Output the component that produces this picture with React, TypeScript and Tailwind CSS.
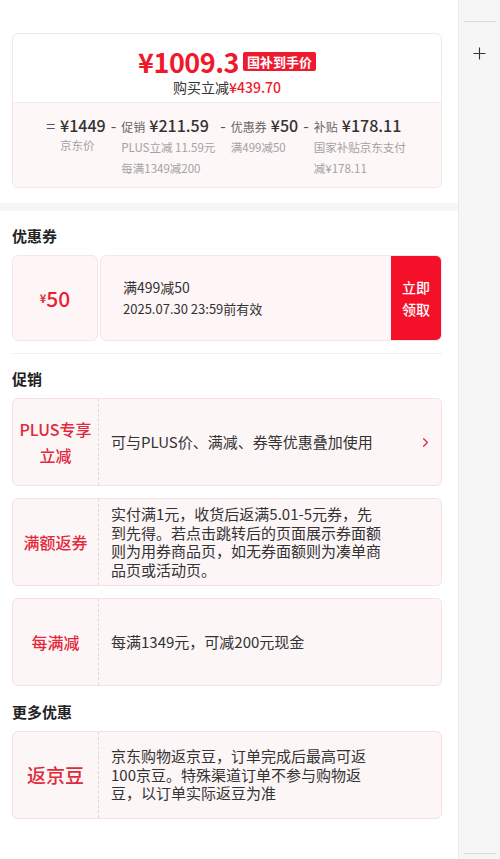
import React from 'react';
import { ChevronRight } from 'lucide-react';

const FONT = { fontFamily: '"Noto Sans CJK SC", "Noto Sans", sans-serif' };

interface PriceColProps {
  label?: string;
  value: string;
  sub: string[];
  width?: string;
}

const PriceCol: React.FC<PriceColProps> = ({ label, value, sub, width }) => (
  <div className={`flex flex-col ${width ?? ''}`}>
    <div className="flex items-baseline gap-[4px] leading-[22px] whitespace-nowrap">
      {label && <span className="text-[12px] text-[#666]">{label}</span>}
      <span className="text-[16px] font-medium text-[#333]">{value}</span>
    </div>
    <div className="-mt-[1px] text-[11.5px] leading-[21px] text-[#a3a3a3]">
      {sub.map(s => <div key={s}>{s}</div>)}
    </div>
  </div>
);

const Op: React.FC<{ c: string }> = ({ c }) => (
  <span className="text-[16px] leading-[22px] text-[#555]">{c}</span>
);

interface PromoProps {
  tag: React.ReactNode;
  tagClass?: string;
  text: string;
  arrow?: boolean;
}

const PromoCard: React.FC<PromoProps> = ({ tag, tagClass, text, arrow }) => (
  <div className="flex h-[88px] rounded-[6px] border border-[#f6e0e3] bg-[#fdf6f7]">
    <div className={`flex w-[86px] shrink-0 items-center justify-center border-r border-dashed border-[#ecd3d7] text-center font-medium text-[#e3283c] ${tagClass ?? 'text-[16px] leading-[26px]'}`}>
      {tag}
    </div>
    <div className="flex flex-1 items-center pl-[12px] pr-[8px]">
      <p className="max-w-[274px] text-[15px] leading-[18.5px] text-[#333]">{text}</p>
      {arrow && <ChevronRight size={15} strokeWidth={2} className="ml-auto text-[#e3283c]" />}
    </div>
  </div>
);

const SectionTitle: React.FC<{ children: React.ReactNode }> = ({ children }) => (
  <h3 className="text-[15px] font-bold leading-[20px] text-[#222]">{children}</h3>
);

export default function App() {
  return (
    <div className="flex min-h-screen bg-white" style={FONT}>
      <div className="w-[458px] shrink-0 pt-[33px] pb-[26px]">
        {/* price breakdown */}
        <div className="ml-[12px] mr-[16px] overflow-hidden rounded-[6px] border border-[#f5e6e8]">
          <div className="flex flex-col items-center pt-[12px] pb-[5px]">
            <div className="flex items-center gap-[4px]">
              <span className="text-[27px] font-bold leading-[31px] tracking-[-0.5px] text-[#f0192b]">¥1009.3</span>
              <span className="rounded-[2px] bg-[#ee1a2e] px-[4px] text-[13px] font-bold leading-[19px] text-white">国补到手价</span>
            </div>
            <div className="text-[14px] leading-[20px] text-[#333]">
              购买立减<span className="font-medium text-[#f0192b]">¥439.70</span>
            </div>
          </div>
          <div className="flex items-start justify-center gap-[5px] border-t border-[#f8eaec] bg-[#fdf7f7] pt-[11px] pb-[8px]">
            <Op c="=" />
            <PriceCol value="¥1449" sub={['京东价']} />
            <Op c="-" />
            <PriceCol label="促销" value="¥211.59" sub={['PLUS立减 11.59元', '每满1349减200']} />
            <Op c="-" />
            <PriceCol label="优惠券" value="¥50" sub={['满499减50']} />
            <Op c="-" />
            <PriceCol label="补贴" value="¥178.11" sub={['国家补贴京东支付减¥178.11']} width="w-[94px]" />
          </div>
        </div>

        <div className="mt-[15px] h-[8px] bg-[#f6f6fa]" />

        <div className="pl-[12px] pr-[16px]">
          {/* coupons */}
          <div className="pt-[15px]">
            <SectionTitle>优惠券</SectionTitle>
          </div>
          <div className="relative mt-[9px] flex h-[86px] gap-[2px]">
            <div className="flex w-[86px] items-center justify-center rounded-[6px] border border-[#f6e6e8] bg-[#fdf5f6] text-[#ea1f33]">
              <span className="text-[11px] font-bold">¥</span>
              <span className="text-[21px] font-medium leading-[26px]">50</span>
            </div>
            <div className="flex flex-1 overflow-hidden rounded-[6px] border border-[#f6e6e8] bg-[#fdf5f6]">
              <div className="flex flex-1 flex-col justify-center pl-[22px]">
                <div className="text-[14px] leading-[22px] text-[#333]">满499减50</div>
                <div className="text-[13px] leading-[22px] text-[#333]">2025.07.30 23:59前有效</div>
              </div>
              <button className="flex w-[50px] flex-col items-center justify-center bg-[#f5102a] text-[14px] font-medium leading-[22px] text-white">
                <span>立即</span>
                <span>领取</span>
              </button>
            </div>
            <span className="absolute left-[84px] top-[-3px] h-[6px] w-[6px] rounded-full bg-white" />
            <span className="absolute left-[84px] bottom-[-3px] h-[6px] w-[6px] rounded-full bg-white" />
          </div>

          <div className="mt-[12px] h-px bg-[#f0f0f0]" />

          {/* promotions */}
          <div className="pt-[15px]">
            <SectionTitle>促销</SectionTitle>
          </div>
          <div className="mt-[9px] flex flex-col gap-[12px]">
            <PromoCard
              tag={<>PLUS专享<br />立减</>}
              text="可与PLUS价、满减、券等优惠叠加使用"
              arrow
            />
            <PromoCard tag="满额返券" text="实付满1元，收货后返满5.01-5元券，先到先得。若点击跳转后的页面展示券面额则为用券商品页，如无券面额则为凑单商品页或活动页。" />
            <PromoCard tag="每满减" text="每满1349元，可减200元现金" />
          </div>

          <div className="pt-[16px]">
            <SectionTitle>更多优惠</SectionTitle>
          </div>
          <div className="mt-[9px]">
            <PromoCard
              tag="返京豆"
              tagClass="text-[19px] leading-[26px]"
              text="京东购物返京豆，订单完成后最高可返100京豆。特殊渠道订单不参与购物返豆，以订单实际返豆为准"
            />
          </div>
        </div>
      </div>

      {/* side rail */}
      <div className="flex flex-1 flex-col items-center border-l border-[#e9e9e9] bg-[#f6f6f6]">
        <div className="mt-[21px] h-px w-[32px] bg-[#dcdcdc]" />
        <svg className="mt-[25px]" width="13" height="13" viewBox="0 0 13 13">
          <path d="M6.5 0.5v12M0.5 6.5h12" stroke="#333" strokeWidth="1.1" fill="none" />
        </svg>
        <div className="mt-auto mb-[5px] h-px w-[32px] bg-[#dcdcdc]" />
      </div>
    </div>
  );
}
